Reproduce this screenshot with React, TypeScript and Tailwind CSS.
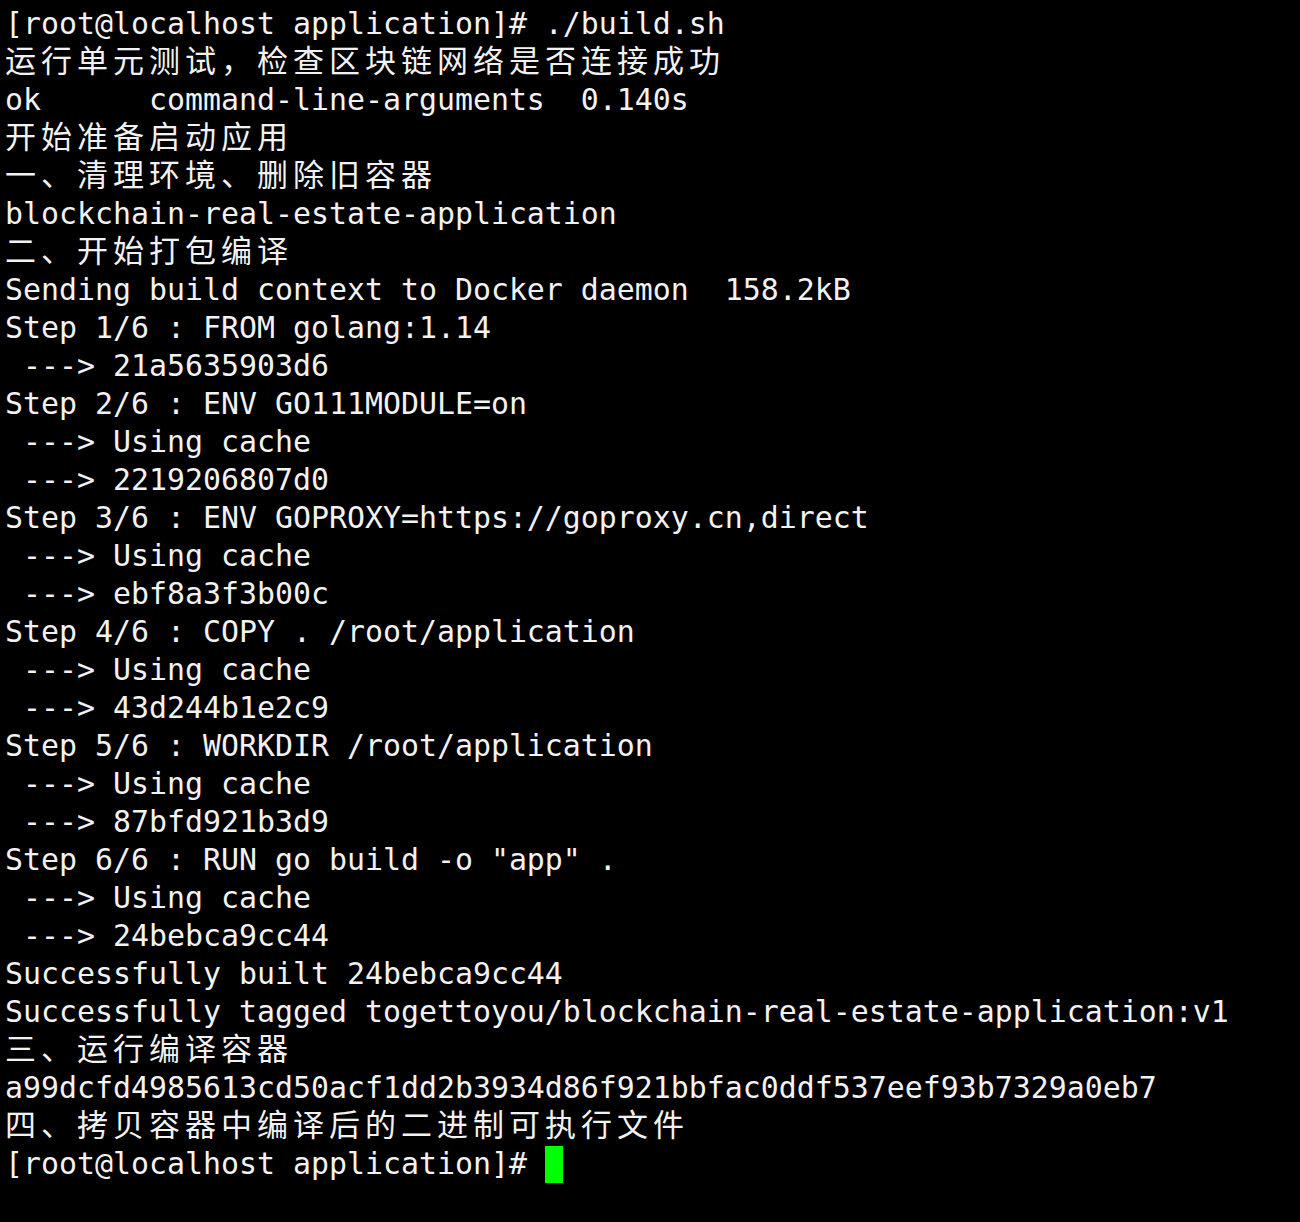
import React from "react";

type Line = { text: string; cjk?: boolean; cursor?: boolean };

const lines: Line[] = [
  { text: "[root@localhost application]# ./build.sh" },
  { text: "运行单元测试，检查区块链网络是否连接成功", cjk: true },
  { text: "ok      command-line-arguments  0.140s" },
  { text: "开始准备启动应用", cjk: true },
  { text: "一、清理环境、删除旧容器", cjk: true },
  { text: "blockchain-real-estate-application" },
  { text: "二、开始打包编译", cjk: true },
  { text: "Sending build context to Docker daemon  158.2kB" },
  { text: "Step 1/6 : FROM golang:1.14" },
  { text: " ---> 21a5635903d6" },
  { text: "Step 2/6 : ENV GO111MODULE=on" },
  { text: " ---> Using cache" },
  { text: " ---> 2219206807d0" },
  { text: "Step 3/6 : ENV GOPROXY=https://goproxy.cn,direct" },
  { text: " ---> Using cache" },
  { text: " ---> ebf8a3f3b00c" },
  { text: "Step 4/6 : COPY . /root/application" },
  { text: " ---> Using cache" },
  { text: " ---> 43d244b1e2c9" },
  { text: "Step 5/6 : WORKDIR /root/application" },
  { text: " ---> Using cache" },
  { text: " ---> 87bfd921b3d9" },
  { text: 'Step 6/6 : RUN go build -o "app" .' },
  { text: " ---> Using cache" },
  { text: " ---> 24bebca9cc44" },
  { text: "Successfully built 24bebca9cc44" },
  { text: "Successfully tagged togettoyou/blockchain-real-estate-application:v1" },
  { text: "三、运行编译容器", cjk: true },
  { text: "a99dcfd4985613cd50acf1dd2b3934d86f921bbfac0ddf537eef93b7329a0eb7" },
  { text: "四、拷贝容器中编译后的二进制可执行文件", cjk: true },
  { text: "[root@localhost application]# ", cursor: true },
];

const App: React.FC = () => {
  return (
    <div className="min-h-[1222px] w-full bg-black pt-[5px] pl-[5px] text-[#f2f2f2]">
      {lines.map((line, i) =>
        line.cjk ? (
          <div
            key={i}
            className="h-[38px] whitespace-pre text-[31px] leading-[32px] tracking-[5px] font-['Noto_Sans_CJK_SC',sans-serif]"
          >
            {line.text}
          </div>
        ) : (
          <div
            key={i}
            className="flex h-[38px] items-center whitespace-pre text-[29.9px] leading-[38px] font-['DejaVu_Sans_Mono',monospace]"
          >
            <span>{line.text}</span>
            {line.cursor && <span className="inline-block h-[37px] w-[18px] bg-[#00ff00]" />}
          </div>
        )
      )}
    </div>
  );
};

export default App;
